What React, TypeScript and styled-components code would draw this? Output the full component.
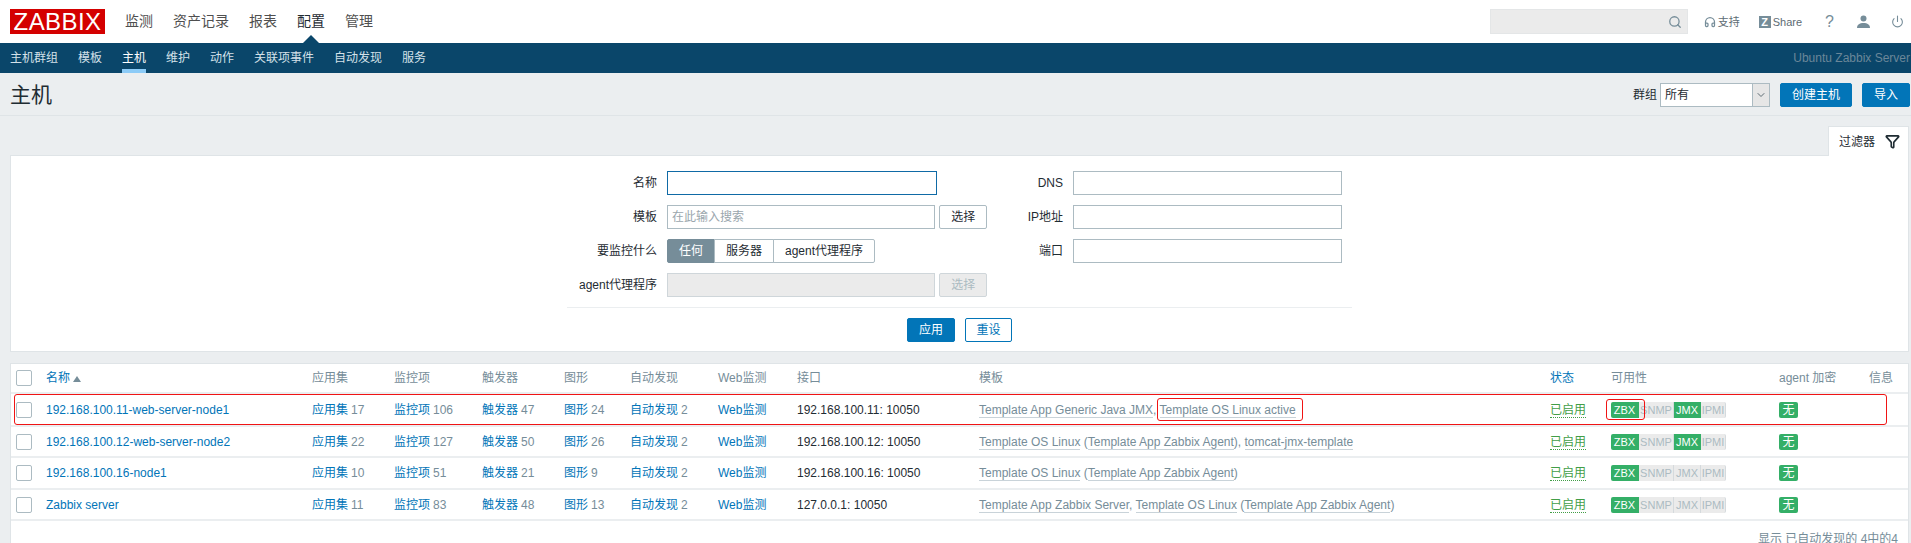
import React from 'react';
import styled, { createGlobalStyle } from 'styled-components';
import { Search, Headphones, Power, Filter, ChevronDown } from 'lucide-react';

const GlobalStyle = createGlobalStyle`
  html, body {
    margin: 0;
    padding: 0;
    height: 543px;
    overflow: hidden;
    background: #ebeef0;
    color: #1f2c33;
    font: 12px/14px 'Liberation Sans', 'Noto Sans CJK SC', sans-serif;
  }
  * { box-sizing: border-box; }
`;

const Header = styled.header`
  display: flex;
  align-items: center;
  height: 43px;
  padding: 0 7px 0 10px;
  background: #fff;
`;

const Logo = styled.div`
  width: 95px;
  height: 25px;
  background: #d40000;
  color: #fff;
  font-size: 24px;
  line-height: 25px;
  letter-spacing: 0.4px;
  text-align: center;
`;

const MainNav = styled.nav`
  display: flex;
  gap: 20px;
  margin-left: 20px;
`;

const MainNavItem = styled.a<{ $active?: boolean }>`
  position: relative;
  font-size: 14px;
  line-height: 43px;
  color: ${({ $active }) => ($active ? '#1f2c33' : '#4f4f4f')};

  ${({ $active }) =>
    $active &&
    `&::after {
      content: '';
      position: absolute;
      left: 6px;
      bottom: 0;
      border: 8px solid transparent;
      border-top: 0;
      border-bottom: 8px solid #0a466a;
    }`}
`;

const HeaderTools = styled.div`
  display: flex;
  align-items: center;
  margin-left: auto;
`;

const SearchBox = styled.div`
  display: flex;
  align-items: center;
  justify-content: flex-end;
  width: 198px;
  height: 25px;
  padding-right: 5px;
  background: #ebebeb;
  border: 1px solid #e4e6e7;
  color: #768d99;
`;

const Tool = styled.a<{ $gap: number }>`
  display: flex;
  align-items: center;
  gap: 2px;
  margin-left: ${({ $gap }) => $gap}px;
  color: #768d99;
`;

const ToolText = styled.span`
  color: #5d6b73;
  font-size: 11px;
`;

const ShareMark = styled.span`
  width: 12px;
  height: 12px;
  background: #768d99;
  color: #fff;
  font-size: 11px;
  font-weight: bold;
  line-height: 12px;
  text-align: center;
`;

const HelpMark = styled.span`
  font-size: 16px;
  line-height: 16px;
`;

const SubNav = styled.nav`
  display: flex;
  gap: 20px;
  height: 30px;
  padding: 0 1px 0 10px;
  background: #0a466a;
`;

const SubNavItem = styled.a<{ $active?: boolean }>`
  line-height: 30px;
  color: ${({ $active }) => ($active ? '#fff' : '#d4e1e9')};
  border-bottom: 4px solid ${({ $active }) => ($active ? '#8ccbf7' : 'transparent')};
`;

const ServerName = styled.span`
  margin-left: auto;
  line-height: 30px;
  color: #6b8799;
`;

const TitleBar = styled.div`
  display: flex;
  align-items: center;
  height: 43px;
  padding: 2px 1px 0 10px;
  margin-bottom: 10px;
  border-bottom: 1px solid #dfe4e7;
`;

const PageTitle = styled.h1`
  margin: 0;
  font-size: 21px;
  font-weight: normal;
  line-height: 24px;
`;

const TitleControls = styled.div`
  display: flex;
  align-items: center;
  gap: 10px;
  margin-left: auto;
`;

const SelectGroup = styled.div`
  display: flex;
  align-items: center;
  gap: 3px;
`;

const FakeSelect = styled.div`
  display: flex;
  align-items: stretch;
  justify-content: space-between;
  width: 110px;
  height: 24px;
  padding-left: 4px;
  background: #fff;
  border: 1px solid #acbbc2;
  line-height: 22px;
`;

const SelectArrow = styled.span`
  display: flex;
  align-items: center;
  justify-content: center;
  width: 17px;
  background: #e6e6e6;
  border-left: 1px solid #acbbc2;
  color: #5d6b73;
`;

const Button = styled.button<{ $outline?: boolean; $width: number }>`
  width: ${({ $width }) => $width}px;
  height: 24px;
  padding: 0;
  background: ${({ $outline }) => ($outline ? '#fff' : '#0275b8')};
  border: 1px solid #0275b8;
  border-radius: 2px;
  color: ${({ $outline }) => ($outline ? '#0275b8' : '#fff')};
  font: inherit;
`;

const Content = styled.main`
  padding: 0 2px 0 10px;
`;

const TabRow = styled.div`
  display: flex;
  justify-content: flex-end;
  margin-bottom: -1px;
`;

const FilterTab = styled.div`
  position: relative;
  display: flex;
  align-items: center;
  justify-content: space-between;
  width: 81px;
  height: 30px;
  padding: 0 8px 0 10px;
  background: #fff;
  border: 1px solid #dfe4e7;
  border-bottom: 0;
  z-index: 1;
`;

const FilterPanel = styled.section`
  height: 197px;
  margin-bottom: 11px;
  padding-top: 15px;
  background: #fff;
  border: 1px solid #dfe4e7;
`;

const FilterGrid = styled.div`
  display: grid;
  grid-template-columns: 89px 320px 66px 269px;
  grid-auto-rows: 24px;
  gap: 10px;
  width: 787px;
  margin: 0 auto;
  padding-left: 2px;
`;

const FieldLabel = styled.label`
  align-self: center;
  text-align: right;
  white-space: nowrap;
  color: #1f2c33;
`;

const FieldControl = styled.div`
  display: flex;
  gap: 4px;
`;

const TextInput = styled.input<{ $width?: number; $focused?: boolean }>`
  width: ${({ $width }) => ($width ? `${$width}px` : '100%')};
  height: 24px;
  padding: 0 4px;
  background: #fff;
  border: 1px solid ${({ $focused }) => ($focused ? '#0f6aa6' : '#acbbc2')};
  border-radius: 0;
  font: inherit;
  outline: none;

  &::placeholder {
    color: #9aa6ad;
  }

  &:disabled {
    background: #ebebeb;
    border-color: #cfd6da;
  }
`;

const PickButton = styled.button`
  width: 48px;
  height: 24px;
  padding: 0;
  background: #fff;
  border: 1px solid #acbbc2;
  border-radius: 2px;
  color: #1f2c33;
  font: inherit;

  &:disabled {
    background: #ebebeb;
    border-color: #cfd6da;
    color: #acbbc2;
  }
`;

const Segments = styled.div`
  display: flex;
  height: 24px;
`;

const Segment = styled.span<{ $active?: boolean; $width: number }>`
  width: ${({ $width }) => $width}px;
  margin-left: -1px;
  background: ${({ $active }) => ($active ? '#768d99' : '#fff')};
  border: 1px solid ${({ $active }) => ($active ? '#768d99' : '#acbbc2')};
  color: ${({ $active }) => ($active ? '#fff' : '#1f2c33')};
  line-height: 22px;
  text-align: center;

  &:first-child {
    margin-left: 0;
    border-radius: 2px 0 0 2px;
  }

  &:last-child {
    border-radius: 0 2px 2px 0;
  }
`;

const FilterActions = styled.div`
  display: flex;
  justify-content: center;
  gap: 10px;
  width: 785px;
  margin: 10px auto 0;
  padding-top: 10px;
  border-top: 1px solid #ebeef0;
`;

const TablePanel = styled.section`
  position: relative;
  height: 190px;
  background: #fff;
  border: 1px solid #dfe4e7;
  border-bottom: 0;
`;

const HostTable = styled.table`
  width: 100%;
  table-layout: fixed;
  border-collapse: collapse;
`;

const HeadCell = styled.th<{ $link?: boolean }>`
  height: 29px;
  padding: 0 0 0 5px;
  font-weight: normal;
  text-align: left;
  white-space: nowrap;
  color: ${({ $link }) => ($link ? '#0275b8' : '#768d99')};
  border-bottom: 2px solid #ebeef0;
`;

const Row = styled.tr<{ $height: number }>`
  height: ${({ $height }) => $height}px;
  border-bottom: 2px solid #ebeef0;
`;

const Cell = styled.td`
  padding: 0 0 0 5px;
  white-space: nowrap;
`;

const Check = styled.span`
  display: block;
  width: 16px;
  height: 16px;
  background: #fff;
  border: 1px solid #acbbc2;
  border-radius: 2px;
`;

const Link = styled.a`
  color: #0275b8;
`;

const Count = styled.sup`
  margin-left: 3px;
  color: #768d99;
  font-size: 12px;
  vertical-align: baseline;
`;

const SortMark = styled.span`
  display: inline-block;
  margin-left: 3px;
  border: 4px solid transparent;
  border-top: 0;
  border-bottom: 6px solid #768d99;
`;

const TemplateLink = styled.a`
  color: #768d99;
  border-bottom: 1px solid #c9d3d9;
`;

const TemplateText = styled.span`
  color: #768d99;
`;

const StatusLink = styled.a`
  color: #429e47;
  border-bottom: 1px dotted #429e47;
`;

const Availability = styled.div`
  display: inline-flex;
  height: 16px;
`;

const Badge = styled.span<{ $on?: boolean; $width: number }>`
  width: ${({ $width }) => $width}px;
  background: ${({ $on }) => ($on ? '#34af67' : '#ebebeb')};
  color: ${({ $on }) => ($on ? '#fff' : '#acbbc2')};
  border-right: 1px solid ${({ $on }) => ($on ? '#34af67' : '#d5dadd')};
  font-size: 11px;
  line-height: 16px;
  text-align: center;
  overflow: hidden;

  &:first-child {
    border-radius: 2px 0 0 2px;
  }

  &:last-child {
    border-radius: 0 2px 2px 0;
  }
`;

const EncryptBadge = styled.span`
  display: block;
  width: 19px;
  height: 16px;
  background: #34af67;
  border-radius: 2px;
  color: #fff;
  line-height: 16px;
  text-align: center;
`;

const Footer = styled.div`
  padding: 11px 10px 0 0;
  text-align: right;
  color: #768d99;
`;

// 截图上手工画的红框
const Annotation = styled.div<{ $x: number; $y: number; $w: number; $h: number }>`
  position: absolute;
  left: ${({ $x }) => $x}px;
  top: ${({ $y }) => $y}px;
  width: ${({ $w }) => $w}px;
  height: ${({ $h }) => $h}px;
  border: 1.5px solid #f01414;
  border-radius: 3px;
  pointer-events: none;
`;

const UserIcon = () => (
  <svg width="13" height="13" viewBox="0 0 13 13" fill="#768d99">
    <circle cx="6.5" cy="3.5" r="3" />
    <path d="M0 13c0-3.4 2.6-5 6.5-5s6.5 1.600 6.500 5z" />
  </svg>
);

const colWidths = [30, 266, 82, 88, 82, 66, 88, 79, 182, 571, 61, 168, 90, 44];

const headers = ['应用集', '监控项', '触发器', '图形', '自动发现', 'Web监测', '接口', '模板'];

type Host = {
  name: string;
  apps: number;
  items: number;
  triggers: number;
  graphs: number;
  address: string;
  jmx: boolean;
  height: number;
  templates: React.ReactNode;
};

const hosts: Host[] = [
  {
    name: '192.168.100.11-web-server-node1',
    apps: 17,
    items: 106,
    triggers: 47,
    graphs: 24,
    address: '192.168.100.11: 10050',
    jmx: true,
    height: 33,
    templates: (
      <>
        <TemplateLink>Template App Generic Java JMX</TemplateLink>
        <TemplateText>, </TemplateText>
        <TemplateLink>Template OS Linux active</TemplateLink>
      </>
    ),
  },
  {
    name: '192.168.100.12-web-server-node2',
    apps: 22,
    items: 127,
    triggers: 50,
    graphs: 26,
    address: '192.168.100.12: 10050',
    jmx: true,
    height: 31,
    templates: (
      <>
        <TemplateLink>Template OS Linux</TemplateLink>
        <TemplateText> (</TemplateText>
        <TemplateLink>Template App Zabbix Agent</TemplateLink>
        <TemplateText>), </TemplateText>
        <TemplateLink>tomcat-jmx-template</TemplateLink>
      </>
    ),
  },
  {
    name: '192.168.100.16-node1',
    apps: 10,
    items: 51,
    triggers: 21,
    graphs: 9,
    address: '192.168.100.16: 10050',
    jmx: false,
    height: 32,
    templates: (
      <>
        <TemplateLink>Template OS Linux</TemplateLink>
        <TemplateText> (</TemplateText>
        <TemplateLink>Template App Zabbix Agent</TemplateLink>
        <TemplateText>)</TemplateText>
      </>
    ),
  },
  {
    name: 'Zabbix server',
    apps: 11,
    items: 83,
    triggers: 48,
    graphs: 13,
    address: '127.0.0.1: 10050',
    jmx: false,
    height: 31,
    templates: (
      <>
        <TemplateLink>Template App Zabbix Server</TemplateLink>
        <TemplateText>, </TemplateText>
        <TemplateLink>Template OS Linux</TemplateLink>
        <TemplateText> (</TemplateText>
        <TemplateLink>Template App Zabbix Agent</TemplateLink>
        <TemplateText>)</TemplateText>
      </>
    ),
  },
];

const App: React.FC = () => (
  <>
    <GlobalStyle />
    <Header>
      <Logo>ZABBIX</Logo>
      <MainNav>
        <MainNavItem>监测</MainNavItem>
        <MainNavItem>资产记录</MainNavItem>
        <MainNavItem>报表</MainNavItem>
        <MainNavItem $active>配置</MainNavItem>
        <MainNavItem>管理</MainNavItem>
      </MainNav>
      <HeaderTools>
        <SearchBox>
          <Search size={14} strokeWidth={2.2} />
        </SearchBox>
        <Tool $gap={16}>
          <Headphones size={12} strokeWidth={2.5} />
          <ToolText>支持</ToolText>
        </Tool>
        <Tool $gap={19}>
          <ShareMark>Z</ShareMark>
          <ToolText>Share</ToolText>
        </Tool>
        <Tool $gap={23}>
          <HelpMark>?</HelpMark>
        </Tool>
        <Tool $gap={23}>
          <UserIcon />
        </Tool>
        <Tool $gap={21}>
          <Power size={13} strokeWidth={2} />
        </Tool>
      </HeaderTools>
    </Header>
    <SubNav>
      <SubNavItem>主机群组</SubNavItem>
      <SubNavItem>模板</SubNavItem>
      <SubNavItem $active>主机</SubNavItem>
      <SubNavItem>维护</SubNavItem>
      <SubNavItem>动作</SubNavItem>
      <SubNavItem>关联项事件</SubNavItem>
      <SubNavItem>自动发现</SubNavItem>
      <SubNavItem>服务</SubNavItem>
      <ServerName>Ubuntu Zabbix Server</ServerName>
    </SubNav>
    <TitleBar>
      <PageTitle>主机</PageTitle>
      <TitleControls>
        <SelectGroup>
          群组
          <FakeSelect>
            所有
            <SelectArrow>
              <ChevronDown size={12} />
            </SelectArrow>
          </FakeSelect>
        </SelectGroup>
        <Button $width={72}>创建主机</Button>
        <Button $width={48}>导入</Button>
      </TitleControls>
    </TitleBar>
    <Content>
      <TabRow>
        <FilterTab>
          过滤器
          <Filter size={15} strokeWidth={2.6} color="#1f2c33" />
        </FilterTab>
      </TabRow>
      <FilterPanel>
        <FilterGrid>
          <FieldLabel>名称</FieldLabel>
          <FieldControl>
            <TextInput $width={270} $focused />
          </FieldControl>
          <FieldLabel>DNS</FieldLabel>
          <TextInput />

          <FieldLabel>模板</FieldLabel>
          <FieldControl>
            <TextInput $width={270} placeholder="在此输入搜索" />
            <PickButton>选择</PickButton>
          </FieldControl>
          <FieldLabel>IP地址</FieldLabel>
          <TextInput />

          <FieldLabel>要监控什么</FieldLabel>
          <Segments>
            <Segment $active $width={48}>任何</Segment>
            <Segment $width={60}>服务器</Segment>
            <Segment $width={102}>agent代理程序</Segment>
          </Segments>
          <FieldLabel>端口</FieldLabel>
          <TextInput />

          <FieldLabel>agent代理程序</FieldLabel>
          <FieldControl>
            <TextInput $width={270} disabled />
            <PickButton disabled>选择</PickButton>
          </FieldControl>
        </FilterGrid>
        <FilterActions>
          <Button $width={48}>应用</Button>
          <Button $width={47} $outline>重设</Button>
        </FilterActions>
      </FilterPanel>
      <TablePanel>
        <HostTable>
          <colgroup>
            {colWidths.map((width, i) => (
              <col key={i} width={width} />
            ))}
          </colgroup>
          <thead>
            <tr>
              <HeadCell>
                <Check />
              </HeadCell>
              <HeadCell $link>
                名称
                <SortMark />
              </HeadCell>
              {headers.map(title => (
                <HeadCell key={title}>{title}</HeadCell>
              ))}
              <HeadCell $link>状态</HeadCell>
              <HeadCell>可用性</HeadCell>
              <HeadCell>agent 加密</HeadCell>
              <HeadCell>信息</HeadCell>
            </tr>
          </thead>
          <tbody>
            {hosts.map(host => (
              <Row key={host.name} $height={host.height}>
                <Cell>
                  <Check />
                </Cell>
                <Cell>
                  <Link>{host.name}</Link>
                </Cell>
                <Cell>
                  <Link>应用集</Link>
                  <Count>{host.apps}</Count>
                </Cell>
                <Cell>
                  <Link>监控项</Link>
                  <Count>{host.items}</Count>
                </Cell>
                <Cell>
                  <Link>触发器</Link>
                  <Count>{host.triggers}</Count>
                </Cell>
                <Cell>
                  <Link>图形</Link>
                  <Count>{host.graphs}</Count>
                </Cell>
                <Cell>
                  <Link>自动发现</Link>
                  <Count>2</Count>
                </Cell>
                <Cell>
                  <Link>Web监测</Link>
                </Cell>
                <Cell>{host.address}</Cell>
                <Cell>{host.templates}</Cell>
                <Cell>
                  <StatusLink>已启用</StatusLink>
                </Cell>
                <Cell>
                  <Availability>
                    <Badge $on $width={28}>ZBX</Badge>
                    <Badge $width={35}>SNMP</Badge>
                    <Badge $on={host.jmx} $width={27}>JMX</Badge>
                    <Badge $width={25}>IPMI</Badge>
                  </Availability>
                </Cell>
                <Cell>
                  <EncryptBadge>无</EncryptBadge>
                </Cell>
                <Cell />
              </Row>
            ))}
          </tbody>
        </HostTable>
        <Footer>显示 已自动发现的 4中的4</Footer>
        <Annotation $x={3} $y={30} $w={1873} $h={31} />
        <Annotation $x={1146} $y={34} $w={146} $h={23} />
        <Annotation $x={1595} $y={35} $w={39} $h={21} />
      </TablePanel>
    </Content>
  </>
);

export default App;
